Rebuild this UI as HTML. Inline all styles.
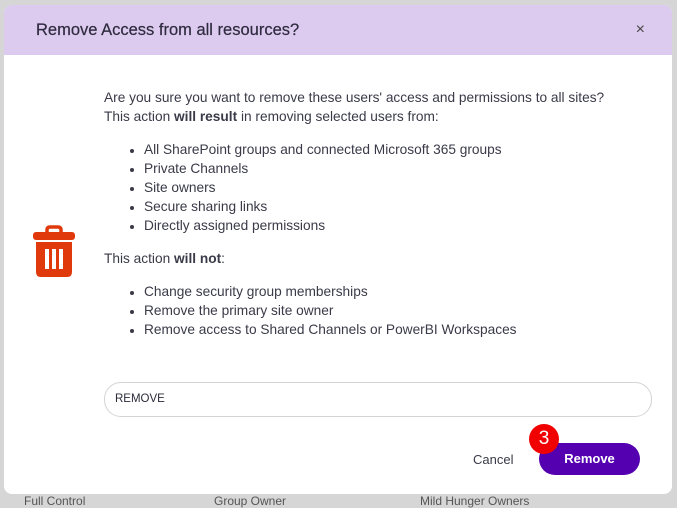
<!DOCTYPE html>
<html><head><style>
body{margin:0;width:677px;height:500px;background:#d6d6d6;font-family:"Liberation Sans",sans-serif;position:relative;overflow:hidden;color:#2b2b3a}
.bg{position:absolute;font-size:12px;color:#555}
.dlg{position:absolute;left:4px;top:5px;width:668px;height:489px;background:#fff;border-radius:8px;overflow:hidden}
.hd{height:50px;background:#dccbee;position:relative}
.hd h1{margin:0;position:absolute;left:32px;top:16px;font-size:16.5px;font-weight:normal;color:#2e2a3f;-webkit-text-stroke:.2px #2e2a3f}
.x{position:absolute;right:27px;top:16px;font-size:16px;color:#444}
.t{position:absolute;font-size:13.7px;color:#3a3a48;white-space:nowrap}
.li{position:absolute;left:140px;font-size:13.7px;color:#3a3a48;white-space:nowrap}
.li:before{content:"";position:absolute;left:-14px;top:7px;width:4px;height:4px;border-radius:50%;background:#3a3a48}
.inp{position:absolute;left:100px;top:377px;border:1px solid #d4d4d4;border-radius:17px;font-size:11.5px;line-height:33px;padding-left:10px;box-sizing:border-box;width:548px;height:35px}
.btn{position:absolute;left:535px;top:438px;width:101px;height:32px;border-radius:16px;background:#5500b0;color:#fff;font-weight:bold;font-size:13px;line-height:32px;text-align:center}
.badge{position:absolute;left:525px;top:419px;width:30px;height:30px;border-radius:50%;background:#f00000;color:#fff;font-size:19px;line-height:30px;text-align:center}
</style></head><body>
<div class="bg" style="left:24px;top:494px">Full Control</div>
<div class="bg" style="left:214px;top:494px">Group Owner</div>
<div class="bg" style="left:420px;top:494px">Mild Hunger Owners</div>
<div class="dlg">
<div class="hd"><h1>Remove Access from all resources?</h1><div class="x">×</div></div>
<svg style="position:absolute;left:28px;top:220px" width="44" height="54" viewBox="0 0 44 54">
<path d="M15 8 v-3 q0-3 3-3 h8 q3 0 3 3 v3" fill="none" stroke="#e03a0c" stroke-width="3.5"/>
<rect x="1" y="7" width="42" height="8" rx="3" fill="#e03a0c"/>
<path d="M4 17 h36 v30 q0 5 -5 5 h-26 q-5 0 -5 -5z" fill="#e03a0c"/>
<rect x="13" y="24" width="4" height="20" fill="#fff"/><rect x="20" y="24" width="4" height="20" fill="#fff"/><rect x="27" y="24" width="4" height="20" fill="#fff"/>
</svg>
<div class="t" style="left:100px;top:85px">Are you sure you want to remove these users' access and permissions to all sites?</div>
<div class="t" style="left:100px;top:104px">This action <b>will result</b> in removing selected users from:</div>
<div class="li" style="top:137px">All SharePoint groups and connected Microsoft 365 groups</div>
<div class="li" style="top:156px">Private Channels</div>
<div class="li" style="top:175px">Site owners</div>
<div class="li" style="top:194px">Secure sharing links</div>
<div class="li" style="top:213px">Directly assigned permissions</div>
<div class="t" style="left:100px;top:246px">This action <b>will not</b>:</div>
<div class="li" style="top:279px">Change security group memberships</div>
<div class="li" style="top:298px">Remove the primary site owner</div>
<div class="li" style="top:317px">Remove access to Shared Channels or PowerBI Workspaces</div>
<div class="inp">REMOVE</div>
<div class="t" style="left:469px;top:447px;font-size:13px">Cancel</div>
<div class="btn">Remove</div>
<div class="badge">3</div>
</div>
</body></html>
